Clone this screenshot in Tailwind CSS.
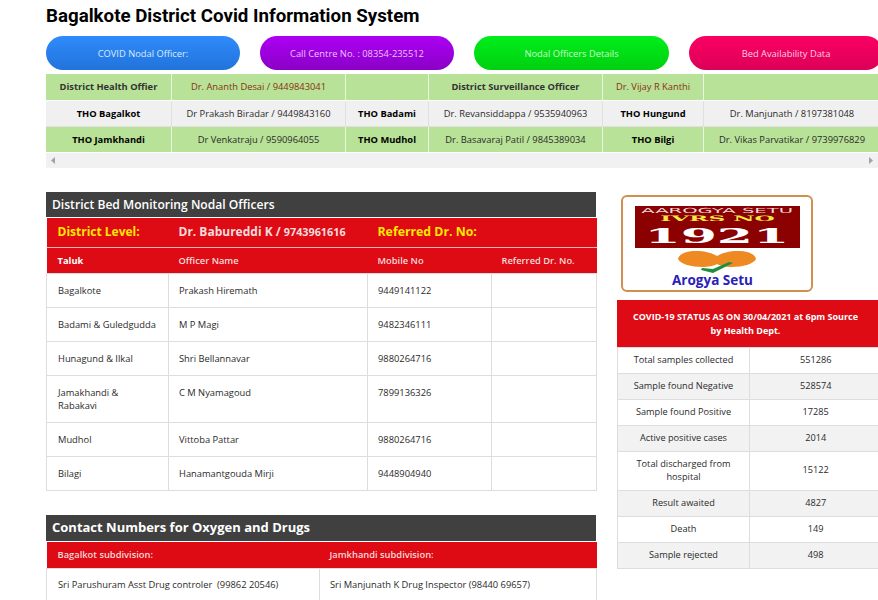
<!DOCTYPE html>
<html>
<head>
<meta charset="utf-8">
<script src="https://cdn.jsdelivr.net/npm/@tailwindcss/browser@4"></script>
</head>
<body class="bg-white overflow-hidden font-['Open_Sans',sans-serif] text-[#2a2a2a]">
<div class="w-[878px] h-[600px] overflow-hidden pl-[46px]">
  <h1 class="font-['Roboto',sans-serif] font-bold text-[18.72px] leading-[20px] text-black pt-[6px] h-[36px]">Bagalkote District Covid Information System</h1>

  <div class="flex gap-[20px] w-[860px] text-[9.33px] text-center h-[34px]">
    <div class="w-[194px] shrink-0 rounded-[17px] bg-gradient-to-b from-[#2f8bfb] to-[#2273dc] text-[#d8ecff] flex items-center justify-center pt-[1px]">COVID Nodal Officer:</div>
    <div class="w-[194px] shrink-0 rounded-[17px] bg-gradient-to-b from-[#ad00f5] to-[#8a00c6] text-[#ecc4ff] flex items-center justify-center pt-[1px]">Call Centre No. : 08354-235512</div>
    <div class="w-[195px] shrink-0 rounded-[17px] bg-gradient-to-b from-[#00ee1a] to-[#00d010] text-[#c8ffc8] flex items-center justify-center pt-[1px]">Nodal Officers Details</div>
    <div class="w-[194px] shrink-0 rounded-[17px] bg-gradient-to-b from-[#fb0062] to-[#dc0058] text-[#ffd0e2] flex items-center justify-center pt-[1px]">Bed Availability Data</div>
  </div>

  <div class="mt-[4px] w-[832px] overflow-hidden">
    <table class="table-fixed border-collapse w-[834px] text-[9.33px] text-center">
      <colgroup><col class="w-[125.5px]"><col class="w-[174px]"><col class="w-[83px]"><col class="w-[174px]"><col class="w-[101px]"><col class="w-[176.5px]"></colgroup>
      <tbody>
        <tr class="h-[26px] bg-[#b8e297]">
          <td class="font-bold text-[#333] border border-white/70 border-t-0 border-l-0">District Health Offier</td>
          <td class="text-[#8a2f12] border border-white/70 border-t-0">Dr. Ananth Desai / 9449843041</td>
          <td class="border border-white/70 border-t-0"></td>
          <td class="font-bold text-[#333] border border-white/70 border-t-0">District Surveillance Officer</td>
          <td class="text-[#8a2f12] border border-white/70 border-t-0">Dr. Vijay R Kanthi</td>
          <td class="border border-white/70 border-t-0 border-r-0"></td>
        </tr>
        <tr class="h-[26px] bg-[#f0f0f0]">
          <td class="font-bold text-black border border-[#e0e0e0] border-l-0 pt-[1px]">THO Bagalkot</td>
          <td class="border border-[#e0e0e0] pt-[1px]">Dr Prakash Biradar / 9449843160</td>
          <td class="font-bold text-black border border-[#e0e0e0] pt-[1px]">THO Badami</td>
          <td class="border border-[#e0e0e0] pt-[1px]">Dr. Revansiddappa / 9535940963</td>
          <td class="font-bold text-black border border-[#e0e0e0] pt-[1px]">THO Hungund</td>
          <td class="border border-[#e0e0e0] border-r-0 pt-[1px]">Dr. Manjunath / 8197381048</td>
        </tr>
        <tr class="h-[26px] bg-[#b8e297]">
          <td class="font-bold text-black border border-white/70 border-l-0 pt-[1px]">THO Jamkhandi</td>
          <td class="border border-white/70 pt-[1px]">Dr Venkatraju / 9590964055</td>
          <td class="font-bold text-black border border-white/70 pt-[1px]">THO Mudhol</td>
          <td class="border border-white/70 pt-[1px]">Dr. Basavaraj Patil / 9845389034</td>
          <td class="font-bold text-black border border-white/70 pt-[1px]">THO Bilgi</td>
          <td class="border border-white/70 border-r-0 pt-[1px]">Dr. Vikas Parvatikar / 9739976829</td>
        </tr>
      </tbody>
    </table>
    <div class="h-[15px] bg-[#f1f1f1] flex items-center justify-between px-[5px]">
      <svg width="4" height="7" viewBox="0 0 4 7"><path d="M4 0v7L0 3.5z" fill="#a3a3a3"/></svg>
      <svg width="4" height="7" viewBox="0 0 4 7"><path d="M0 0v7l4-3.5z" fill="#a3a3a3"/></svg>
    </div>
  </div>

  <div class="flex mt-[24px]">
    <div class="w-[550px] shrink-0">
      <div class="h-[25px] bg-[#404040] text-white text-[12.1px] font-semibold leading-[25px] px-[6px]">District Bed Monitoring Nodal Officers</div>
      <table class="table-fixed border-collapse w-[550px] mt-[1px] text-[9.33px]">
        <colgroup><col class="w-[122px]"><col class="w-[199px]"><col class="w-[124px]"><col class="w-[105px]"></colgroup>
        <tbody>
          <tr class="h-[30px] bg-[#de0a14] border-b border-[#f3b5b5]">
            <td class="pl-[11px] text-[12px] font-bold text-[#ffe800]">District Level:</td>
            <td class="pl-[10px] font-bold text-[#f8dcdc] text-[12px]">Dr. Babureddi K / <span class="text-[10.8px]">9743961616</span></td>
            <td colspan="2" class="pl-[10px] text-[12.3px] font-bold text-[#ffe800]">Referred Dr. No:</td>
          </tr>
          <tr class="h-[26px] bg-[#de0a14] text-[#f8dada] font-semibold">
            <td class="pl-[11px] font-bold text-white">Taluk</td><td class="pl-[10px]">Officer Name</td><td class="pl-[10px]">Mobile No</td><td class="pl-[10px]">Referred Dr. No.</td>
          </tr>
          <tr class="h-[34px]"><td class="pl-[11px] border border-[#ddd]">Bagalkote</td><td class="pl-[10px] border border-[#ddd]">Prakash Hiremath</td><td class="pl-[10px] border border-[#ddd]">9449141122</td><td class="border border-[#ddd]"></td></tr>
          <tr class="h-[34px]"><td class="pl-[11px] border border-[#ddd]">Badami &amp; Guledgudda</td><td class="pl-[10px] border border-[#ddd]">M P Magi</td><td class="pl-[10px] border border-[#ddd]">9482346111</td><td class="border border-[#ddd]"></td></tr>
          <tr class="h-[34px]"><td class="pl-[11px] border border-[#ddd]">Hunagund &amp; Ilkal</td><td class="pl-[10px] border border-[#ddd]">Shri Bellannavar</td><td class="pl-[10px] border border-[#ddd]">9880264716</td><td class="border border-[#ddd]"></td></tr>
          <tr class="h-[47px]"><td class="pl-[11px] pt-[10px] align-top leading-[13px] border border-[#ddd]">Jamakhandi &amp;<br>Rabakavi</td><td class="pl-[10px] pt-[10px] align-top leading-[13px] border border-[#ddd]">C M Nyamagoud</td><td class="pl-[10px] pt-[10px] align-top leading-[13px] border border-[#ddd]">7899136326</td><td class="border border-[#ddd]"></td></tr>
          <tr class="h-[34px]"><td class="pl-[11px] border border-[#ddd]">Mudhol</td><td class="pl-[10px] border border-[#ddd]">Vittoba Pattar</td><td class="pl-[10px] border border-[#ddd]">9880264716</td><td class="border border-[#ddd]"></td></tr>
          <tr class="h-[34px]"><td class="pl-[11px] border border-[#ddd]">Bilagi</td><td class="pl-[10px] border border-[#ddd]">Hanamantgouda Mirji</td><td class="pl-[10px] border border-[#ddd]">9448904940</td><td class="border border-[#ddd]"></td></tr>
        </tbody>
      </table>

      <div class="mt-[24px] h-[26px] bg-[#404040] text-white text-[13px] font-bold leading-[25px] px-[6px]">Contact Numbers for Oxygen and Drugs</div>
      <table class="table-fixed border-collapse w-[550px] mt-[1px] text-[9.33px]">
        <colgroup><col class="w-[273px]"><col class="w-[277px]"></colgroup>
        <tbody>
          <tr class="h-[26px] bg-[#de0a14] text-[#f8dada] font-semibold"><td class="pl-[11px]">Bagalkot subdivision:</td><td class="pl-[10px]">Jamkhandi subdivision:</td></tr>
          <tr class="h-[34px]"><td class="pl-[11px] border border-[#ddd]">Sri Parushuram Asst Drug controler &nbsp;(99862 20546)</td><td class="pl-[10px] border border-[#ddd]">Sri Manjunath K Drug Inspector (98440 69657)</td></tr>
        </tbody>
      </table>
    </div>

    <div class="ml-[21px] w-[261px] shrink-0">
      <div class="ml-[4px] mt-[3px] w-[192px] h-[97px] border-2 border-[#cf9050] rounded-[6px] flex flex-col items-center bg-white">
        <div class="mt-[9px] w-[165px] h-[42px] bg-[#8b0000] flex flex-col items-center font-['DejaVu_Serif',serif] font-bold leading-none overflow-hidden">
          <span class="h-[8px] leading-[8px] mt-[1px] font-['DejaVu_Sans',sans-serif] font-normal text-[7px] text-[#eadada] scale-x-[2.8]">AAROGYA SETU</span>
          <span class="h-[8px] leading-[8px] mt-[0.5px] text-[7.5px] text-[#f5e642] scale-x-[3.1]">IVRS NO</span>
          <span class="h-[18px] leading-[18px] mt-[4px] text-[20px] text-white scale-x-[2.6]">1921</span>
        </div>
        <svg class="mt-[3px]" width="78" height="22" viewBox="0 0 78 22">
          <path d="M0 8C1 3 8 0 18 0c9 0 16 2 21 5 5-3 12-5 21-5 10 0 17 3 18 8-2 5-14 8-24 8-6 0-12-1-15-3-3 2-9 3-15 3C14 16 2 13 0 8z" fill="#ef8a22"/>
          <path d="M24 17l11 1 16-7 4 1-20 10-12-3z" fill="#1f8f3c"/>
        </svg>
        <span class="font-bold text-[13.5px] leading-[15px] text-[#2a22b8] mr-[9px]">Arogya Setu</span>
      </div>
      <div class="mt-[8px] w-[264px] text-[9.2px] text-center">
        <div class="w-[261px] h-[47px] bg-[#de0a14] text-white text-[9px] font-bold leading-[14px] flex items-center justify-center pl-[12px] pr-[16px] pt-[1px]">COVID-19 STATUS AS ON 30/04/2021 at 6pm Source by Health Dept.</div>
        <table class="table-fixed border-collapse w-[264px]">
          <colgroup><col class="w-[132px]"><col class="w-[132px]"></colgroup>
          <tbody>
            <tr class="h-[26px]"><td class="border border-[#ddd]">Total samples collected</td><td class="border border-[#ddd] border-r-0">551286</td></tr>
            <tr class="h-[26px] bg-[#f2f2f2]"><td class="border border-[#ddd]">Sample found Negative</td><td class="border border-[#ddd] border-r-0">528574</td></tr>
            <tr class="h-[26px]"><td class="border border-[#ddd]">Sample found Positive</td><td class="border border-[#ddd] border-r-0">17285</td></tr>
            <tr class="h-[26px] bg-[#f2f2f2]"><td class="border border-[#ddd]">Active positive cases</td><td class="border border-[#ddd] border-r-0">2014</td></tr>
            <tr class="h-[39px]"><td class="border border-[#ddd] leading-[13px] px-[14px] pb-[1px]">Total discharged from hospital</td><td class="border border-[#ddd] border-r-0 pb-[1px]">15122</td></tr>
            <tr class="h-[26px] bg-[#f2f2f2]"><td class="border border-[#ddd]">Result awaited</td><td class="border border-[#ddd] border-r-0">4827</td></tr>
            <tr class="h-[26px]"><td class="border border-[#ddd]">Death</td><td class="border border-[#ddd] border-r-0">149</td></tr>
            <tr class="h-[26px] bg-[#f2f2f2]"><td class="border border-[#ddd]">Sample rejected</td><td class="border border-[#ddd] border-r-0">498</td></tr>
          </tbody>
        </table>
      </div>
    </div>
  </div>
</div>
</body>
</html>
